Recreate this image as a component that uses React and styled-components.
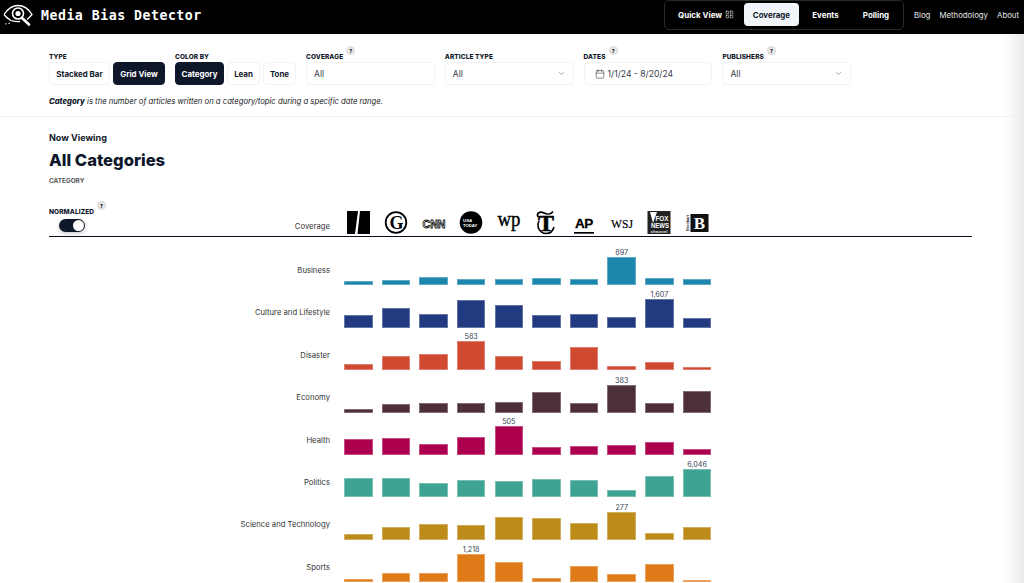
import React from 'react'
import styled, { createGlobalStyle } from 'styled-components'
import { Calendar, ChevronDown, LayoutGrid } from 'lucide-react'

const FONT = `Inter, "Noto Sans", "Liberation Sans", sans-serif`

const GlobalStyle = createGlobalStyle`
  html, body {
    margin: 0;
    height: 583px;
    overflow: hidden;
    background: #fff;
  }
  body {
    font-family: ${FONT};
    color: #0f172a;
  }
  * { box-sizing: border-box; }
`

const CATEGORIES = [
  { name: 'Business', color: '#1c86ad', value: '897', peak: 7, bars: [4, 5, 8, 6, 6, 7, 6, 28, 7, 6] },
  { name: 'Culture and Lifestyle', color: '#223a7f', value: '1,607', peak: 8, bars: [12.5, 20, 14, 28, 23, 12.5, 14, 10.5, 29, 10] },
  { name: 'Disaster', color: '#cf4a30', value: '583', peak: 3, bars: [6, 14.5, 16.5, 29, 14.5, 9, 23, 4, 8, 3] },
  { name: 'Economy', color: '#4d2f3a', value: '383', peak: 7, bars: [4, 9, 10, 9.5, 10.5, 21, 9.5, 28, 10, 22] },
  { name: 'Health', color: '#ac004f', value: '505', peak: 4, bars: [16, 17, 10.5, 17.5, 29, 8, 8.5, 10, 13, 6] },
  { name: 'Politics', color: '#3fa394', value: '6,046', peak: 9, bars: [19, 19.5, 14, 17.5, 16.5, 18, 17.5, 7.5, 21.5, 28] },
  { name: 'Science and Technology', color: '#bd8b19', value: '277', peak: 7, bars: [6, 13, 16, 15, 23, 22, 16.5, 28, 6.5, 12.5] },
  { name: 'Sports', color: '#df7a18', value: '1,218', peak: 3, bars: [3.5, 9.5, 9, 28, 20, 4, 16, 8, 18, 2.5] },
]

const Page = styled.div`
  position: relative;
  height: 583px;
  overflow: hidden;
`

const EdgeFade = styled.div`
  position: absolute;
  top: 34px;
  right: 0;
  bottom: 0;
  width: 20px;
  background: linear-gradient(to right, rgba(235, 235, 235, 0), rgba(235, 235, 235, 1));
  pointer-events: none;
`

const Header = styled.header`
  height: 34px;
  background: #000;
  display: flex;
  align-items: flex-start;
  justify-content: space-between;
  padding: 0 5px 0 3px;
`

const Brand = styled.div`
  height: 30px;
  display: flex;
  align-items: center;
  gap: 8px;
  color: #fff;
`

const BrandName = styled.span`
  font-family: "DejaVu Sans Mono", "Liberation Mono", monospace;
  font-weight: 700;
  font-size: 13.2px;
  letter-spacing: 0.52px;
`

const HeaderRight = styled.div`
  display: flex;
  align-items: center;
  gap: 10px;
`

const ViewNav = styled.nav`
  height: 30px;
  width: 240px;
  margin-top: -1px;
  border: 1px solid #2b2b2b;
  border-radius: 5px;
  display: flex;
  align-items: center;
  padding-left: 13px;
`

const QuickView = styled.span`
  display: flex;
  align-items: center;
  gap: 3px;
  color: #fff;
  font-size: 8px;
  font-weight: 700;
  width: 66px;
`

const ViewTab = styled.span`
  height: 23px;
  width: ${p => p.$width}px;
  display: flex;
  align-items: center;
  justify-content: center;
  border-radius: 4px;
  font-size: 7.9px;
  font-weight: 700;
  background: ${p => (p.$active ? '#f1f5f9' : 'transparent')};
  color: ${p => (p.$active ? '#0f172a' : '#fff')};
`

const SiteLinks = styled.div`
  display: flex;
  gap: 9px;
  color: #e5e5e5;
  font-size: 7.8px;
  height: 30px;
  align-items: center;
`

const Filters = styled.section`
  padding: 17px 49px 0;
  height: 83px;
  border-bottom: 1px solid #f1f1f1;
`

const FilterRow = styled.div`
  display: flex;
  align-items: flex-end;
  gap: 10px;
`

const Field = styled.div`
  display: flex;
  flex-direction: column;
  gap: 1px;
`

const FieldLabelRow = styled.div`
  display: flex;
  align-items: flex-end;
  gap: 3px;
  height: 10px;
`

const FieldLabel = styled.span`
  font-size: 6.5px;
  font-weight: 800;
  line-height: 8px;
  letter-spacing: 0.1px;
  text-transform: uppercase;
`

const HelpBadge = styled.span`
  width: 9px;
  height: 9px;
  margin-bottom: 6px;
  border-radius: 50%;
  background: #e8e8e8;
  border: 1px solid #d8d8d8;
  font-size: 5px;
  font-weight: 800;
  display: flex;
  align-items: center;
  justify-content: center;
`

const ButtonGroup = styled.div`
  display: flex;
  gap: 3px;
`

const ToggleButton = styled.span`
  height: 23px;
  width: ${p => p.$width}px;
  display: flex;
  align-items: center;
  justify-content: center;
  border-radius: 4px;
  font-size: 7.9px;
  font-weight: 700;
  border: 1px solid ${p => (p.$active ? '#0f172a' : '#f1f3f6')};
  background: ${p => (p.$active ? '#0f172a' : '#fff')};
  color: ${p => (p.$active ? '#fff' : '#0f172a')};
`

const Select = styled.div`
  height: 23px;
  width: 128.8px;
  border: 1px solid #f1f3f6;
  border-radius: 4px;
  display: flex;
  align-items: center;
  justify-content: space-between;
  padding: 0 7px;
  font-size: 8.6px;
  color: #333b48;
`

const DateValue = styled.span`
  display: flex;
  align-items: center;
  gap: 3px;
  padding-left: 3px;
`

const Description = styled.p`
  margin: 11px 0 0;
  font-size: 7.7px;
  line-height: 11px;
  font-style: italic;
  color: #222;
  b { font-weight: 800; color: #0f172a; }
`

const Main = styled.main`
  padding: 15px 52px 0 49px;
`

const Eyebrow = styled.div`
  font-size: 9px;
  font-weight: 700;
  line-height: 12px;
`

const Title = styled.h1`
  margin: 4px 0 0;
  font-size: 16.6px;
  font-weight: 800;
  line-height: 24px;
`

const Subtitle = styled.div`
  margin-top: 5px;
  font-size: 6.4px;
  font-weight: 700;
  line-height: 8px;
  color: #555;
`

const ChartHead = styled.div`
  margin-top: 17px;
  height: 35px;
  display: flex;
  align-items: flex-end;
  border-bottom: 1.5px solid #0b1020;
`

const HeadLeft = styled.div`
  width: 295px;
  display: flex;
  justify-content: space-between;
  align-items: flex-end;
  padding: 0 14px 4px 0;
`

const Normalized = styled.div`
  display: flex;
  flex-direction: column;
  margin-top: -12px;
`

const Switch = styled.span`
  width: 26px;
  height: 13px;
  margin: 3px 0 0 10px;
  border-radius: 7px;
  background: #0f172a;
  display: flex;
  justify-content: flex-end;
  align-items: center;
  padding: 1px;
  box-shadow: 0 2px 4px rgba(0, 0, 0, 0.2);
`

const SwitchKnob = styled.span`
  width: 11px;
  height: 11px;
  border-radius: 50%;
  background: #fff;
`

const AxisLabel = styled.span`
  font-size: 7.7px;
  color: #333;
  line-height: 10px;
`

const LogoRow = styled.div`
  display: grid;
  grid-template-columns: repeat(10, 28.5px);
  column-gap: 9.15px;
  padding-bottom: 1.5px;
`

const LogoCell = styled.div`
  height: 24px;
  display: flex;
  justify-content: center;
  svg { display: block; overflow: visible; }
`

const Chart = styled.div`
  padding-top: 6px;
`

const Row = styled.div`
  height: 42.4px;
  display: flex;
  align-items: flex-end;
`

const RowLabel = styled.div`
  width: 295px;
  padding: 0 14px 9.4px 0;
  text-align: right;
  font-size: 7.7px;
  line-height: 10px;
  color: #333;
`

const Bars = styled.div`
  height: 100%;
  display: grid;
  grid-template-columns: repeat(10, 28.5px);
  column-gap: 9.15px;
`

const BarCell = styled.div`
  display: flex;
  flex-direction: column;
  justify-content: flex-end;
  align-items: center;
`

const BarValue = styled.span`
  font-size: 7.2px;
  line-height: 9px;
  color: #374151;
  white-space: nowrap;
`

const Bar = styled.div`
  width: 100%;
  background: ${p => p.$color};
  border: 1px solid ${p => p.$color};
  border-color: color-mix(in srgb, ${p => p.$color} 70%, white);
`

function EyeLogo() {
  return (
    <svg width="30" height="24" viewBox="0 0 30 24" fill="none" stroke="#fff">
      <path d="M1 11.5 C6 4 11 2.5 15 2.5 C20 2.5 25 5 29 11.5 C27 14 25.5 15.5 24 16.5" strokeWidth="1.3" />
      <path d="M1 11.5 C3 14 5 16 8 17.5 C11 18.5 14 19 17 18.5" strokeWidth="1.3" />
      <circle cx="15" cy="10.5" r="5.5" strokeWidth="1.6" />
      <circle cx="15" cy="10.5" r="2.6" fill="#fff" stroke="none" />
      <path d="M19 15 L26 21.5" strokeWidth="2.6" strokeLinecap="round" />
      <path d="M2 21 L8 20" strokeWidth="1" strokeDasharray="1.5 2" />
    </svg>
  )
}

const serif = '"Liberation Serif", serif'
const sans = '"Liberation Sans", sans-serif'

const LOGOS = [
  <svg key="a" width="24" height="24" viewBox="0 0 24 24">
    <polygon points="1,0 12,0 9,23 1,23" fill="#000" />
    <polygon points="14,0 24,0 24,23 11.500,23" fill="#000" />
  </svg>,
  <svg key="b" width="24" height="24" viewBox="0 0 24 24">
    <circle cx="12" cy="11.500" r="10.300" fill="none" stroke="#000" strokeWidth="1.800" />
    <text x="12.500" y="17.500" textAnchor="middle" fontFamily={serif} fontWeight="700" fontSize="18">G</text>
  </svg>,
  <svg key="c" width="26" height="24" viewBox="0 0 26 24">
    <text x="13" y="16.500" textAnchor="middle" fontFamily={sans} fontWeight="700" fontSize="10.500" textLength="23" lengthAdjust="spacingAndGlyphs" fill="#fff" stroke="#111" strokeWidth="0.8">CNN</text>
  </svg>,
  <svg key="d" width="24" height="24" viewBox="0 0 24 24">
    <circle cx="12" cy="11.500" r="11.300" fill="#000" />
    <text x="4" y="11" fontFamily={sans} fontWeight="700" fontSize="4.400" fill="#fff">USA</text>
    <text x="4" y="15.500" fontFamily={sans} fontWeight="700" fontSize="4.200" fill="#fff">TODAY</text>
  </svg>,
  <svg key="e" width="26" height="24" viewBox="0 0 26 24">
    <text x="13" y="15" textAnchor="middle" fontFamily={serif} fontSize="20" textLength="23" lengthAdjust="spacingAndGlyphs" stroke="#000" strokeWidth="0.4">wp</text>
  </svg>,
  <svg key="f" width="24" height="24" viewBox="0 0 24 24">
    <text x="12" y="20" textAnchor="middle" fontFamily={serif} fontWeight="700" fontSize="24" stroke="#000" strokeWidth="0.6">T</text>
    <path d="M4 6 C2 2 6 0 10 2 C13 3.500 17 3.500 19 0.500" fill="none" stroke="#000" strokeWidth="1.600" />
    <path d="M5 10 C2 16 6 22 12 22.500 C16 22.500 19 20 20 16" fill="none" stroke="#000" strokeWidth="1.600" />
  </svg>,
  <svg key="g" width="24" height="24" viewBox="0 0 24 24">
    <text x="12" y="16.500" textAnchor="middle" fontFamily={sans} fontWeight="700" fontSize="13.500" letterSpacing="-0.5" stroke="#000" strokeWidth="0.3">AP</text>
    <rect x="2" y="21" width="20" height="1.700" fill="#000" />
  </svg>,
  <svg key="h" width="26" height="24" viewBox="0 0 26 24">
    <text x="13" y="16.500" textAnchor="middle" fontFamily={serif} fontSize="13" textLength="22" lengthAdjust="spacingAndGlyphs" stroke="#000" strokeWidth="0.2">WSJ</text>
  </svg>,
  <svg key="i" width="24" height="24" viewBox="0 0 24 24">
    <rect x="0.500" y="0" width="23" height="23" fill="#222" />
    <path d="M3 1 L6 12 L10 1 Z" fill="#fff" />
    <text x="15" y="10" textAnchor="middle" fontFamily={sans} fontWeight="700" fontSize="6.500" fill="#fff" textLength="13" lengthAdjust="spacingAndGlyphs">FOX</text>
    <text x="13" y="16.500" textAnchor="middle" fontFamily={sans} fontWeight="700" fontSize="6.500" fill="#fff" textLength="18" lengthAdjust="spacingAndGlyphs">NEWS</text>
    <text x="12" y="21.500" textAnchor="middle" fontFamily={sans} fontWeight="700" fontSize="2.800" fill="#ddd" textLength="17" lengthAdjust="spacingAndGlyphs">channel</text>
  </svg>,
  <svg key="j" width="26" height="24" viewBox="0 0 26 24">
    <rect x="6.500" y="3" width="18" height="18" fill="#111" />
    <text x="15.500" y="18" textAnchor="middle" fontFamily={serif} fontWeight="700" fontSize="17" fill="#fff">B</text>
    <text x="0" y="0" transform="translate(5,20) rotate(-90)" fontFamily={sans} fontWeight="700" fontSize="4.200" textLength="16" lengthAdjust="spacingAndGlyphs" fill="#222">Breitbart</text>
  </svg>,
]

export default function App() {
  return (
    <Page>
      <GlobalStyle />
      <Header>
        <Brand>
          <EyeLogo />
          <BrandName>Media Bias Detector</BrandName>
        </Brand>
        <HeaderRight>
          <ViewNav>
            <QuickView>
              Quick View <LayoutGrid size={9} strokeWidth={1.4} />
            </QuickView>
            <ViewTab $active $width={55}>Coverage</ViewTab>
            <ViewTab $width={53}>Events</ViewTab>
            <ViewTab $width={48}>Polling</ViewTab>
          </ViewNav>
          <SiteLinks>
            <span>Blog</span>
            <span>Methodology</span>
            <span>About</span>
          </SiteLinks>
        </HeaderRight>
      </Header>

      <Filters>
        <FilterRow>
          <Field>
            <FieldLabelRow><FieldLabel>Type</FieldLabel></FieldLabelRow>
            <ButtonGroup>
              <ToggleButton $width={61}>Stacked Bar</ToggleButton>
              <ToggleButton $active $width={52}>Grid View</ToggleButton>
            </ButtonGroup>
          </Field>
          <Field>
            <FieldLabelRow><FieldLabel>Color By</FieldLabel></FieldLabelRow>
            <ButtonGroup>
              <ToggleButton $active $width={49}>Category</ToggleButton>
              <ToggleButton $width={33}>Lean</ToggleButton>
              <ToggleButton $width={33}>Tone</ToggleButton>
            </ButtonGroup>
          </Field>
          <Field>
            <FieldLabelRow><FieldLabel>Coverage</FieldLabel><HelpBadge>?</HelpBadge></FieldLabelRow>
            <Select>All</Select>
          </Field>
          <Field>
            <FieldLabelRow><FieldLabel>Article Type</FieldLabel></FieldLabelRow>
            <Select>All <ChevronDown size={9} color="#888" /></Select>
          </Field>
          <Field>
            <FieldLabelRow><FieldLabel>Dates</FieldLabel><HelpBadge>?</HelpBadge></FieldLabelRow>
            <Select>
              <DateValue><Calendar size={10} strokeWidth={1.4} />1/1/24 - 8/20/24</DateValue>
            </Select>
          </Field>
          <Field>
            <FieldLabelRow><FieldLabel>Publishers</FieldLabel><HelpBadge>?</HelpBadge></FieldLabelRow>
            <Select>All <ChevronDown size={9} color="#888" /></Select>
          </Field>
        </FilterRow>
        <Description>
          <b>Category</b> is the number of articles written on a category/topic during a specific date range.
        </Description>
      </Filters>

      <Main>
        <Eyebrow>Now Viewing</Eyebrow>
        <Title>All Categories</Title>
        <Subtitle>CATEGORY</Subtitle>
        <ChartHead>
          <HeadLeft>
            <Normalized>
              <FieldLabelRow><FieldLabel>Normalized</FieldLabel><HelpBadge>?</HelpBadge></FieldLabelRow>
              <Switch><SwitchKnob /></Switch>
            </Normalized>
            <AxisLabel>Coverage</AxisLabel>
          </HeadLeft>
          <LogoRow>
            {LOGOS.map((logo, i) => <LogoCell key={i}>{logo}</LogoCell>)}
          </LogoRow>
        </ChartHead>
        <Chart>
          {CATEGORIES.map(cat => (
            <Row key={cat.name}>
              <RowLabel>{cat.name}</RowLabel>
              <Bars>
                {cat.bars.map((h, i) => (
                  <BarCell key={i}>
                    {i === cat.peak && <BarValue>{cat.value}</BarValue>}
                    <Bar $color={cat.color} style={{ height: h }} />
                  </BarCell>
                ))}
              </Bars>
            </Row>
          ))}
        </Chart>
      </Main>
      <EdgeFade />
    </Page>
  )
}
